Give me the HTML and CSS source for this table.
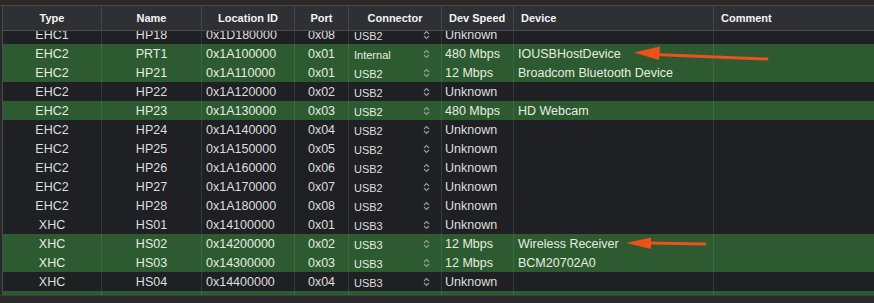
FILE: index.html
```html
<!DOCTYPE html>
<html lang="en">
<head>
  <meta charset="UTF-8" />
  <title>USB Ports</title>
  <link rel="stylesheet" href="styles.css">
</head>
<body>

  <div class="topbar"></div>

  <div class="ports">
    <div class="row head">
      <div class="c center">Type</div>
      <div class="c center">Name</div>
      <div class="c center">Location ID</div>
      <div class="c center">Port</div>
      <div class="c center">Connector</div>
      <div class="c">Dev Speed</div>
      <div class="c">Device</div>
      <div class="c">Comment</div>
    </div>

    <div class="scroll">
      <div class="rows" id="rows"></div>
    </div>
  </div>

  <div class="bottombar"></div>

  <svg class="marks" width="874" height="303" viewBox="0 0 874 303">
    <line x1="655" y1="54.5" x2="767" y2="59" class="mark-line" />
    <polygon points="634,52.5 660,46.5 659,60" class="mark-head" />
    <line x1="648" y1="243" x2="705" y2="244" class="mark-line" />
    <polygon points="626,243 651,237.5 651,249" class="mark-head" />
  </svg>

  <script>
    const ports = [
      ['EHC1', 'HP18', '0x1D180000', '0x08', 'USB2', 'Unknown', '', false],
      ['EHC2', 'PRT1', '0x1A100000', '0x01', 'Internal', '480 Mbps', 'IOUSBHostDevice', true],
      ['EHC2', 'HP21', '0x1A110000', '0x01', 'USB2', '12 Mbps', 'Broadcom Bluetooth Device', true],
      ['EHC2', 'HP22', '0x1A120000', '0x02', 'USB2', 'Unknown', '', false],
      ['EHC2', 'HP23', '0x1A130000', '0x03', 'USB2', '480 Mbps', 'HD Webcam', true],
      ['EHC2', 'HP24', '0x1A140000', '0x04', 'USB2', 'Unknown', '', false],
      ['EHC2', 'HP25', '0x1A150000', '0x05', 'USB2', 'Unknown', '', false],
      ['EHC2', 'HP26', '0x1A160000', '0x06', 'USB2', 'Unknown', '', false],
      ['EHC2', 'HP27', '0x1A170000', '0x07', 'USB2', 'Unknown', '', false],
      ['EHC2', 'HP28', '0x1A180000', '0x08', 'USB2', 'Unknown', '', false],
      ['XHC', 'HS01', '0x14100000', '0x01', 'USB3', 'Unknown', '', false],
      ['XHC', 'HS02', '0x14200000', '0x02', 'USB3', '12 Mbps', 'Wireless Receiver', true],
      ['XHC', 'HS03', '0x14300000', '0x03', 'USB3', '12 Mbps', 'BCM20702A0', true],
      ['XHC', 'HS04', '0x14400000', '0x04', 'USB3', 'Unknown', '', false],
      ['XHC', 'HS05', '0x14500000', '0x05', 'USB3', '480 Mbps', '', true]
    ];

    const stepper = '<svg class="stepper" width="7" height="10" viewBox="0 0 7 10">' +
      '<path d="M1 4 L3.5 1.5 L6 4 M1 6 L3.5 8.5 L6 6" /></svg>';

    const rows = document.getElementById('rows');
    ports.forEach(p => {
      const row = document.createElement('div');
      row.className = 'row' + (p[7] ? ' active' : '');
      row.innerHTML =
        `<div class="c center">${p[0]}</div>` +
        `<div class="c center">${p[1]}</div>` +
        `<div class="c loc">${p[2]}</div>` +
        `<div class="c center">${p[3]}</div>` +
        `<div class="c conn"><span>${p[4]}</span>${stepper}</div>` +
        `<div class="c speed">${p[5]}</div>` +
        `<div class="c dev">${p[6]}</div>` +
        `<div class="c"></div>`;
      rows.appendChild(row);
    });
  </script>
</body>
</html>
```

FILE: styles.css
```css
body {
  margin: 0;
  width: 874px;
  height: 303px;
  overflow: hidden;
  background-color: #2a2929;
  font-family: 'Liberation Sans', Arial, sans-serif;
  color: #dedede;
  position: relative;
}

.topbar {
  height: 6px;
  background-color: #2b2827;
  border-bottom: 1px solid #48474a;
  box-sizing: border-box;
}

.ports {
  margin-left: 2px;
  border-left: 1px solid #4a4b4e;
}

.row {
  display: grid;
  grid-template-columns: 99px 100px 93px 54px 93px 72px 200px 1fr;
  height: 19px;
  background-color: #1f2023;
}

.row.active {
  background-color: #2d5a30;
  color: #e4efe1;
}

.row .c {
  border-right: 1px solid #36383b;
  display: flex;
  align-items: center;
  font-size: 12.5px;
  white-space: nowrap;
  overflow: hidden;
}

.row.active .c {
  border-right-color: #3c6a3f;
}

.row .c:last-child {
  border-right: none;
}

.row.head {
  height: 24px;
  background-color: #2e3033;
  border-bottom: 1px solid #4b4c50;
  color: #f4f4f4;
}

.row.head .c {
  font-size: 11px;
  font-weight: bold;
  padding-left: 7px;
  border-right-color: #45464a;
}

.row.head .c.center {
  justify-content: center;
  padding-left: 0;
}

.c.center {
  justify-content: center;
}

.c.loc {
  padding-left: 4px;
}

.c.conn {
  justify-content: space-between;
  padding: 0 11px 0 5px;
}

.c.conn span {
  font-size: 11px;
  padding-top: 3px;
}

.stepper path {
  fill: none;
  stroke: #9a9b9e;
  stroke-width: 1.1;
}

.c.speed {
  padding-left: 3px;
}

.c.dev {
  padding-left: 4px;
}

.scroll {
  height: 264px;
  overflow: hidden;
}

.rows {
  margin-top: -6px;
}

.bottombar {
  height: 8px;
  border-top: 1px solid #3d3d3d;
  background-color: #2a2a2a;
}

.marks {
  position: absolute;
  left: 0;
  top: 0;
  pointer-events: none;
}

.mark-line {
  stroke: #f0501a;
  stroke-width: 3;
  stroke-linecap: round;
}

.mark-head {
  fill: #f0501a;
}
```
